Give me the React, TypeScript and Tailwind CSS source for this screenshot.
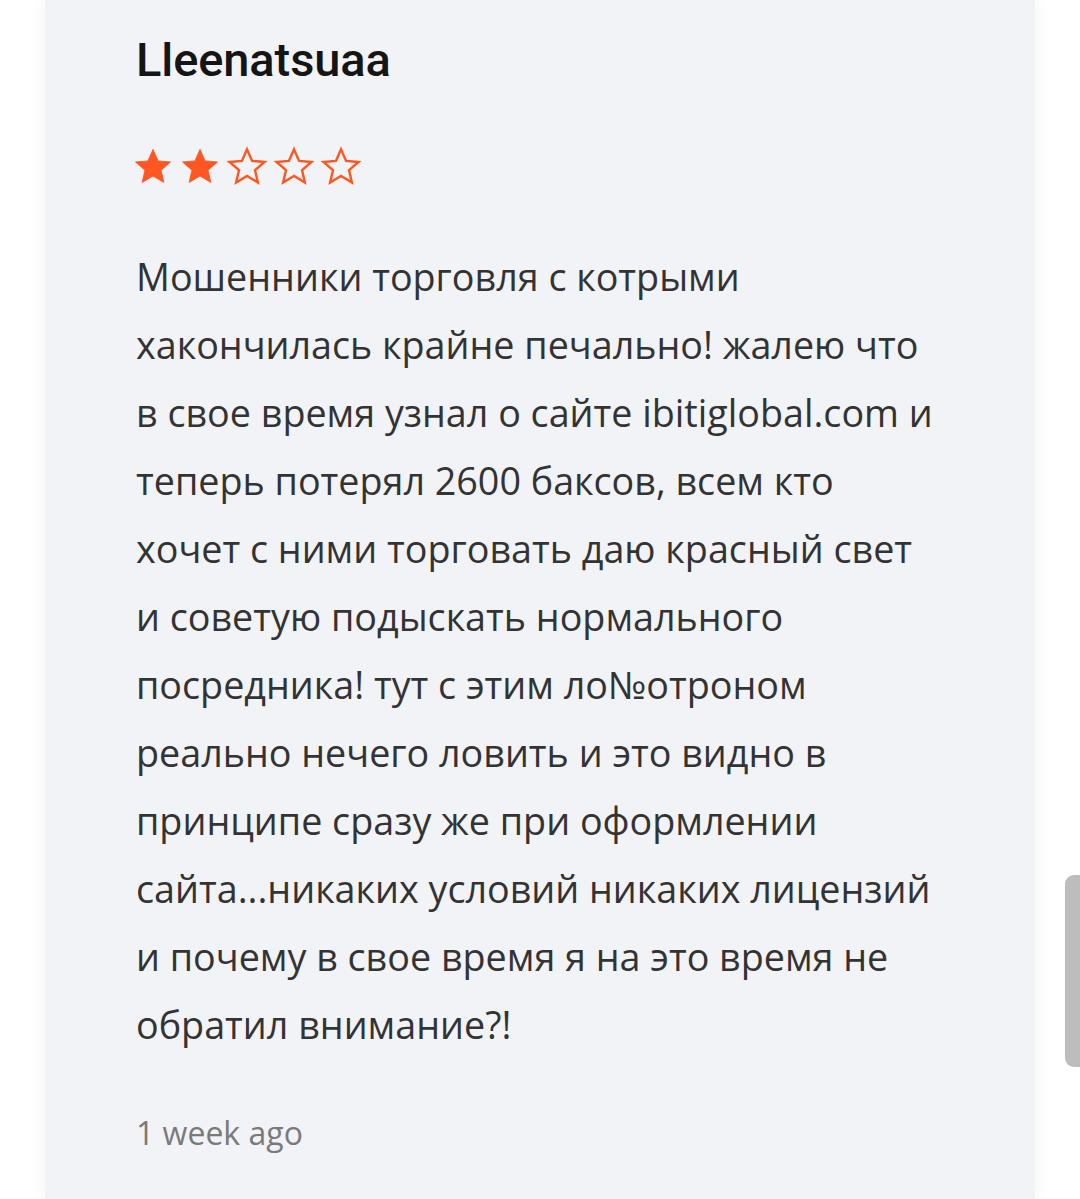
import { useMemo } from "react";

const lines = [
  "Мошенники торговля с котрыми",
  "хакончилась крайне печально! жалею что",
  "в свое время узнал о сайте ibitiglobal.com и",
  "теперь потерял 2600 баксов, всем кто",
  "хочет с ними торговать даю красный свет",
  "и советую подыскать нормального",
  "посредника! тут с этим ло№отроном",
  "реально нечего ловить и это видно в",
  "принципе сразу же при оформлении",
  "сайта...никаких условий никаких лицензий",
  "и почему в свое время я на это время не",
  "обратил внимание?!",
];

function Star({ filled }: { filled: boolean }) {
  return (
    <svg viewBox="0 0 24 24" className="w-[42px] h-[42px]" aria-hidden="true">
      <path
        d="M12 2.5l2.9 6.6 7.1.6-5.4 4.7 1.6 7-6.2-3.7-6.2 3.7 1.6-7L2 9.7l7.1-.6z"
        fill={filled ? "#ff5722" : "none"}
        stroke="#ff5722"
        strokeWidth={filled ? 0.5 : 1.4}
        strokeLinejoin="miter"
      />
    </svg>
  );
}

export default function App() {
  const rating = 2;
  const stars = useMemo(() => [1, 2, 3, 4, 5], []);

  return (
    <div className="relative min-h-[1199px] bg-white overflow-hidden">
      <div className="mx-[45px] min-h-[1199px] bg-[#f2f3f7] shadow-[0_0_16px_rgba(0,0,0,0.06)] pl-[91px] pt-[30px]">
        <h1 className="font-['Roboto',sans-serif] font-medium text-[47px] leading-[60px] text-[#151515] tracking-[-0.1px]">
          Lleenatsuaa
        </h1>
        <div className="flex gap-[5px] mt-[55px] -ml-[4.5px]">
          {stars.map((n) => (
            <Star key={n} filled={n <= rating} />
          ))}
        </div>
        <div className="mt-[56px] font-['Open_Sans',sans-serif] text-[37.7px] leading-[68px] text-[#333333]">
          {lines.map((l, i) => (
            <div key={i} className="whitespace-nowrap">
              {l}
            </div>
          ))}
        </div>
        <p className="mt-[54px] font-['Open_Sans',sans-serif] text-[32px] leading-[40px] text-[#7a7a7a]">
          1 week ago
        </p>
      </div>
      <div className="absolute right-0 top-[875px] w-[15px] h-[192px] rounded-l-[9px] bg-[#bdbdbd]" />
    </div>
  );
}
